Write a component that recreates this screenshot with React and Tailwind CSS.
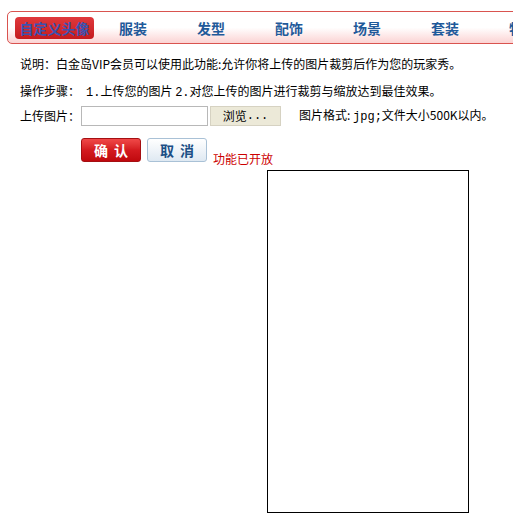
import React from "react";

const font = { fontFamily: '"Noto Sans CJK SC", "Liberation Sans", sans-serif' };
const mono = { fontFamily: '"Liberation Mono", "Noto Sans CJK SC", monospace' };

export default function App() {
  const tabs = ["服装", "发型", "配饰", "场景", "套装", "特殊"];
  return (
    <div className="relative w-[513px] h-[532px] overflow-hidden bg-white text-[12px] text-black" style={font}>
      <div className="absolute left-[7px] top-[11px] w-[560px] h-[33px] rounded-[5px] border border-[#d9534f] bg-gradient-to-b from-white via-white to-[#fbd3d3] flex items-center pl-[7px]">
        <div className="w-[79px] h-[22px] rounded-[4px] bg-gradient-to-b from-[#e0383c] to-[#c41a1e] flex items-center justify-center text-[14px] font-bold text-[#3b52b0] shrink-0 leading-none">
          自定义头像
        </div>
        {tabs.map((t) => (
          <div key={t} className="w-[78px] shrink-0 text-center text-[14px] font-bold text-[#1f5a9a] leading-none">
            {t}
          </div>
        ))}
      </div>

      <div className="absolute left-0 top-[56px] w-full">
        <div className="pl-[20px] h-[16px] leading-[16px]">说明：白金岛VIP会员可以使用此功能:允许你将上传的图片裁剪后作为您的玩家秀。</div>
        <div className="pl-[20px] mt-[11px] h-[16px] leading-[16px] whitespace-nowrap">
          操作步骤：<span className="ml-[6px]"><span style={mono}>1.</span>上传您的图片 <span style={mono}>2.</span>对您上传的图片进行裁剪与缩放达到最佳效果。</span>
        </div>
        <div className="pl-[20px] mt-[7px] flex items-center h-[20px] whitespace-nowrap">
          <span className="w-[61px]">上传图片：</span>
          <div className="w-[127px] h-[20px] border border-[#b8b8b8] bg-white"></div>
          <div className="ml-[2px] w-[71px] h-[20px] bg-[#ece9d8] border border-[#d6d2c2] flex items-center justify-center text-black">浏览<span style={mono}>...</span></div>
          <span className="ml-[18px]">图片格式: <span style={mono}>jpg;</span>文件大小500K以内。</span>
        </div>
        <div className="pl-[81px] mt-[12px] flex items-end">
          <div className="w-[60px] h-[24px] rounded-[3px] border border-[#a50f12] bg-gradient-to-b from-[#f04848] via-[#d41a1f] to-[#c0080d] flex items-center justify-center text-white font-bold text-[14px] tracking-[6px] pl-[6px]">确认</div>
          <div className="ml-[6px] w-[60px] h-[24px] rounded-[3px] border border-[#a9c1d6] bg-gradient-to-b from-white to-[#dfe9f2] flex items-center justify-center text-[#1c4f86] font-bold text-[14px] tracking-[6px] pl-[6px]">取消</div>
          <div className="ml-[6px] text-[#c00] leading-none mb-[-3px]">功能已开放</div>
        </div>
      </div>

      <div className="absolute left-[267px] top-[170px] w-[202px] h-[343px] border border-black bg-white"></div>
    </div>
  );
}
